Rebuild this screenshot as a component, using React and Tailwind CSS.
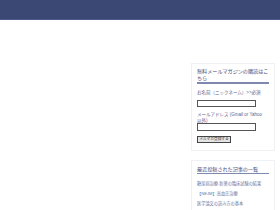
import { useState } from 'react'

const posts = [
  { label: '糖尿病治療-新薬の臨床試験の結果', href: '#' },
  { label: '【NEJM】高血圧治療', href: '#' },
  { label: '医学論文の読み方の基本', href: '#' },
]

function Widget({ title, children, first }) {
  return (
    <section className={`border border-[#f0f1f4] bg-white px-[5px] pb-[7px] ${first ? 'pt-[4px]' : 'pt-[5px]'}`}>
      <h3 className={`text-[5.1px] leading-[7px] text-[#3f4b7b] ${first ? 'border-b-2' : 'border-b'} border-[#7f89ad]`}>
        {title}
      </h3>
      {children}
    </section>
  )
}

export default function App() {
  const [name, setName]   = useState('')
  const [email, setEmail] = useState('')

  return (
    <div className="min-h-screen bg-white" style={{ fontFamily: '"Liberation Sans", "Noto Sans CJK JP", sans-serif' }}>
      <header className="h-[20px] bg-[#3b4874] border-b border-[#4c5b8d]" />

      <div className="flex pt-[43px] pr-[5px]">
        <main className="flex-1" />

        <aside className="w-[84px] flex flex-col gap-[9px]">
          <Widget title="無料メールマガジンの購読はこちら" first>
            <form onSubmit={e => e.preventDefault()} className="pt-[6px] text-[4.5px] leading-[6px] text-[#5a6590]">
              <p>お名前（ニックネーム）&gt;&gt;必須</p>
              <input value={name} onChange={e => setName(e.target.value)}
                className="mt-[4px] block w-[59px] h-[7px] border border-[#555] bg-white" />
              <p className="mt-[5px] leading-[5.5px]">
                メールアドレス (Gmail or Yahoo <span className="whitespace-nowrap">以外)</span>
              </p>
              <input value={email} onChange={e => setEmail(e.target.value)}
                className="block w-[59px] h-[8px] border border-[#555] bg-white" />
              <button type="submit"
                className="mt-[5px] block w-[34px] h-[7px] border border-[#444] bg-[#e4e4e4] text-[3.7px] leading-[5px] text-[#333]">
                メルマガ登録する
              </button>
            </form>
          </Widget>

          <Widget title="最近投稿された記事の一覧">
            <ul className="pt-[5px] text-[4.2px] leading-[6px]">
              {posts.map(p => (
                <li key={p.label} className="py-[2px] whitespace-nowrap">
                  <a href={p.href} className="text-[#6a75a0]">{p.label}</a>
                </li>
              ))}
            </ul>
          </Widget>
        </aside>
      </div>
    </div>
  )
}
